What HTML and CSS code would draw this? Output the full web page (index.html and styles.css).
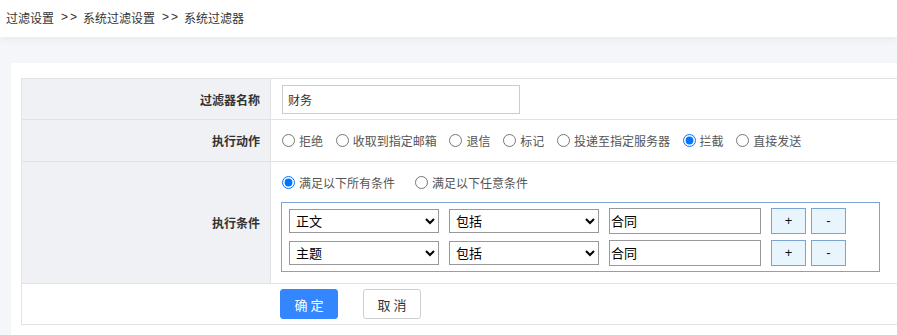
FILE: index.html
```html
<!DOCTYPE html>
<html lang="zh-CN">

<head>
    <meta charset="UTF-8">
    <title>系统过滤器</title>
    <link rel="stylesheet" href="styles.css">
</head>

<body>
    <div class="header">
        <span class="crumb">过滤设置</span><span class="sep">&gt;&gt;</span><span class="crumb">系统过滤设置</span><span class="sep">&gt;&gt;</span><span class="crumb">系统过滤器</span>
    </div>
    <div class="main">
        <div class="card">
            <table class="form-table">
                <tr class="row-name">
                    <td class="label">过滤器名称</td>
                    <td class="field"><input type="text" class="name-input" value="财务"></td>
                </tr>
                <tr class="row-action">
                    <td class="label">执行动作</td>
                    <td class="field">
                        <label class="radio"><input type="radio" name="action">拒绝</label>
                        <label class="radio"><input type="radio" name="action">收取到指定邮箱</label>
                        <label class="radio"><input type="radio" name="action">退信</label>
                        <label class="radio"><input type="radio" name="action">标记</label>
                        <label class="radio"><input type="radio" name="action">投递至指定服务器</label>
                        <label class="radio"><input type="radio" name="action" checked>拦截</label>
                        <label class="radio"><input type="radio" name="action">直接发送</label>
                    </td>
                </tr>
                <tr class="row-cond">
                    <td class="label">执行条件</td>
                    <td class="field">
                        <div class="match-line">
                            <label class="radio wide"><input type="radio" name="match" checked>满足以下所有条件</label>
                            <label class="radio"><input type="radio" name="match">满足以下任意条件</label>
                        </div>
                        <div class="cond-box">
                            <div class="cond-row">
                                <select class="cond-select">
                                    <option>正文</option>
                                    <option>主题</option>
                                </select>
                                <select class="cond-select">
                                    <option>包括</option>
                                </select>
                                <input type="text" class="cond-value" value="合同">
                                <button class="mini-btn">+</button>
                                <button class="mini-btn">-</button>
                            </div>
                            <div class="cond-row">
                                <select class="cond-select">
                                    <option>主题</option>
                                    <option>正文</option>
                                </select>
                                <select class="cond-select">
                                    <option>包括</option>
                                </select>
                                <input type="text" class="cond-value" value="合同">
                                <button class="mini-btn">+</button>
                                <button class="mini-btn">-</button>
                            </div>
                        </div>
                    </td>
                </tr>
                <tr class="row-buttons">
                    <td class="field-buttons" colspan="2">
                        <div class="buttons">
                            <button class="btn btn-primary">确定</button>
                            <button class="btn btn-default">取消</button>
                        </div>
                    </td>
                </tr>
            </table>
        </div>
    </div>
</body>

</html>
```

FILE: styles.css
```css
html,
body {
    margin: 0;
    padding: 0;
}

body {
    background: #f5f6fa;
    font-family: "Noto Sans CJK SC", "Noto Sans", sans-serif;
    font-size: 12px;
    color: #333;
}

.header {
    height: 37px;
    background: #fff;
    box-shadow: 0 2px 8px rgba(0, 0, 0, 0.06);
    display: flex;
    align-items: center;
    padding-left: 6px;
    padding-bottom: 3px;
    box-sizing: border-box;
}

.crumb {
    font-size: 12px;
    color: #333;
}

.sep {
    font-family: "Liberation Sans", sans-serif;
    font-size: 12px;
    letter-spacing: 2px;
    margin: 0 4px 0 7px;
    color: #333;
}

.main {
    padding: 26px 0 0 11px;
}

.card {
    background: #fff;
    padding: 15px 0 11px 10px;
}

.form-table {
    width: 100%;
    border-collapse: collapse;
    border-left: 1px solid #e4e4e4;
}

.form-table td {
    border-top: 1px solid #e2e2e2;
    border-bottom: 1px solid #e2e2e2;
    padding: 0;
}

.form-table .label {
    width: 238px;
    background: #f0f1f4;
    border-right: 1px solid #e2e2e2;
    text-align: right;
    padding-right: 10px;
    font-weight: bold;
    color: #333;
}

.form-table .field {
    padding-left: 11px;
}

.row-name td {
    height: 40px;
}

.row-action td {
    height: 41px;
}

.row-cond td {
    height: 121px;
}

.row-buttons td {
    height: 40px;
}

.name-input {
    width: 238px;
    height: 29px;
    box-sizing: border-box;
    border: 1px solid #ccc;
    padding: 0 5px;
    font-family: inherit;
    font-size: 12px;
    color: #333;
    outline: none;
    display: block;
}

.radio {
    display: inline-flex;
    align-items: center;
    margin-right: 10px;
    color: #555;
    font-size: 12px;
}

.radio input {
    margin: 0 4px 0 0;
    width: 13px;
    height: 13px;
}

.radio.wide {
    margin-right: 20px;
}

.match-line {
    display: flex;
    align-items: center;
    height: 16px;
    margin-top: 1px;
}

.cond-box {
    width: 599px;
    box-sizing: border-box;
    border: 1px solid #7ba3d4;
    margin: 11px 0 0 -1px;
    padding: 5px 0 5px 7px;
    display: flex;
    flex-direction: column;
    gap: 6px;
}

.cond-row {
    display: flex;
    align-items: center;
    height: 26px;
}

.cond-select {
    width: 150px;
    height: 24px;
    margin-right: 10px;
    border: 1px solid #999;
    border-radius: 0;
    background: #fff;
    font-family: inherit;
    font-size: 13px;
    color: #000;
    padding: 0 0 0 2px;
}

.cond-value {
    width: 152px;
    height: 26px;
    box-sizing: border-box;
    border: 1px solid #999;
    padding: 0 1px;
    margin-right: 10px;
    font-family: inherit;
    font-size: 13px;
    color: #000;
    outline: none;
}

.mini-btn {
    width: 35px;
    height: 26px;
    box-sizing: border-box;
    margin-right: 5px;
    border: 1px solid #7ba3d4;
    background: #e9f5fd;
    color: #111;
    font-family: "Liberation Sans", sans-serif;
    font-size: 13px;
    padding: 0;
}

.form-table .field-buttons {
    padding-left: 258px;
}

.buttons {
    display: flex;
    gap: 25px;
}

.btn {
    width: 58px;
    height: 30px;
    border-radius: 3px;
    font-family: inherit;
    font-size: 13px;
    letter-spacing: 3px;
    text-indent: 3px;
    padding: 0;
}

.btn-primary {
    background: #3486ff;
    border: 1px solid #3486ff;
    color: #fff;
}

.btn-default {
    background: #fff;
    border: 1px solid #cfcfcf;
    color: #333;
}
```
